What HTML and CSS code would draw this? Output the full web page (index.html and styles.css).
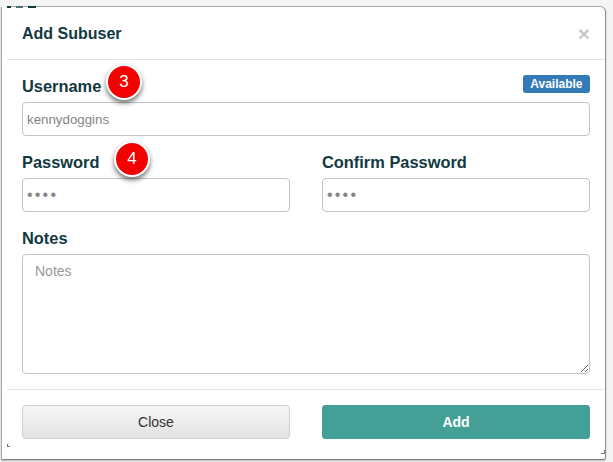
FILE: index.html
```html
<!DOCTYPE html>
<html lang="en">
<head>
	<meta charset="UTF-8">
	<link rel="stylesheet" href="styles.css">
	<title>Add Subuser</title>
</head>
<body>
	<div class="modal">
		<span class="behind"></span>
		<div class="modal-header">
			<h4>Add Subuser</h4>
			<span class="close">&times;</span>
		</div>
		<div class="modal-body">
			<div class="field">
				<div class="label-row">
					<label for="username">Username</label>
					<span class="badge">Available</span>
				</div>
				<input id="username" type="text" value="kennydoggins">
				<span class="marker marker-user">3</span>
			</div>
			<div class="two-col">
				<div class="field">
					<label for="password">Password</label>
					<input id="password" type="password" value="abcd">
					<span class="marker marker-pass">4</span>
				</div>
				<div class="field">
					<label for="confirm">Confirm Password</label>
					<input id="confirm" type="password" value="abcd">
				</div>
			</div>
			<div class="field">
				<label for="notes">Notes</label>
				<textarea id="notes" placeholder="Notes"></textarea>
			</div>
		</div>
		<div class="modal-footer">
			<button class="btn btn-close">Close</button>
			<button class="btn btn-add">Add</button>
		</div>
		<span class="corner corner-left"></span>
		<span class="corner corner-right"></span>
	</div>
</body>
</html>
```
FILE: styles.css
```css
* {
  box-sizing: border-box;
}
html, body {
  height: 100%;
}
body {
  margin: 0;
  padding: 6px 7px 2px 1px;
  background: #f5f5f5;
  color: #12393f;
  font: 14px "Liberation Sans", Arial, sans-serif;
  overflow: hidden;
}
.modal {
  position: relative;
  height: 454px;
  border: 1px solid #a9a9a9;
  border-bottom-color: #7d7d7d;
  border-right-color: #8f8f8f;
  border-radius: 0 6px 3px 0;
  background: #fff;
  box-shadow: 0 1px 2px rgba(0, 0, 0, .25);
}
/* the top edge only starts at x=7, with bits of the page behind showing */
.modal::before {
  content: '';
  position: absolute;
  top: -1px;
  left: -1px;
  width: 6px;
  height: 1px;
  background: #f5f5f5;
}
.behind {
  position: absolute;
  top: -1px;
  left: 5px;
  width: 29px;
  height: 2px;
  background: linear-gradient(90deg, #12393f 0 4px, transparent 4px 9px, #4d6d70 9px 16px, transparent 16px 21px, #12393f 21px);
}
.corner {
  position: absolute;
  width: 3px;
  height: 3px;
  border-bottom: 1px solid #777;
}
.corner-left {
  bottom: 12px;
  left: 5px;
  border-left: 1px solid #777;
}
.corner-right {
  bottom: 5px;
  right: 0;
  width: 4px;
  height: 4px;
  border-right: 1px solid #777;
}
.modal-header {
  display: flex;
  justify-content: space-between;
  align-items: center;
  height: 53px;
  margin-left: 5px;
  padding: 1px 15px 0;
  border-bottom: 1px solid #e5e5e5;
}
h4 {
  margin: 0;
  font-size: 16px;
  font-weight: 700;
}
.close {
  color: #c8c8c8;
  font-size: 21px;
  font-weight: 700;
  line-height: 1;
}
.modal-body {
  display: flex;
  flex-direction: column;
  gap: 16px;
  height: 329px;
  margin-left: 5px;
  padding: 16px 15px 0;
}
.field {
  position: relative;
  display: flex;
  flex-direction: column;
  gap: 5px;
}
.label-row {
  display: flex;
  justify-content: space-between;
  align-items: center;
}
label {
  font-size: 16.4px;
  font-weight: 700;
  line-height: 21px;
}
.badge {
  margin: -1px 0 4px;
  padding: 2px 7.5px;
  border-radius: 3px;
  background: #337ab7;
  color: #fff;
  font-size: 12px;
  font-weight: 700;
  line-height: 14px;
}
input, textarea {
  width: 100%;
  border: 1px solid #c4c4c4;
  border-radius: 4px;
  background: #fff;
  color: #858585;
  font: 13.3px "Liberation Sans", Arial, sans-serif;
  padding: 0 4px;
  outline: none;
}
input {
  height: 34px;
}
input[type='password'] {
  font-size: 16px;
  letter-spacing: 2.2px;
}
textarea {
  display: block;
  height: 120px;
  padding: 8px 12px;
  font-size: 14px;
}
textarea::placeholder {
  color: #999;
}
.two-col {
  display: grid;
  grid-template-columns: 268px 268px;
  justify-content: space-between;
}
.marker {
  position: absolute;
  display: flex;
  justify-content: center;
  align-items: center;
  width: 36px;
  height: 36px;
  border: 2.5px solid #fff;
  border-radius: 50%;
  background: #f50000;
  box-shadow: 0 3px 5px rgba(0, 0, 0, .55);
  color: #fff;
  font-size: 17px;
}
.marker-user {
  top: -12px;
  left: 84px;
}
.marker-pass {
  top: -11px;
  left: 92px;
}
.modal-footer {
  display: grid;
  grid-template-columns: 268px 268px;
  justify-content: space-between;
  margin-left: 5px;
  padding: 15px 15px 0;
  border-top: 1px solid #e5e5e5;
}
.btn {
  height: 34px;
  border: 1px solid #d0d0d0;
  border-radius: 4px;
  font: 14px "Liberation Sans", Arial, sans-serif;
}
.btn-close {
  background: linear-gradient(#f7f7f7, #e2e2e2);
  color: #333;
}
.btn-add {
  border-color: #44a096;
  border-radius: 3px;
  background: #44a096;
  color: #fff;
  font-weight: 700;
}
```
